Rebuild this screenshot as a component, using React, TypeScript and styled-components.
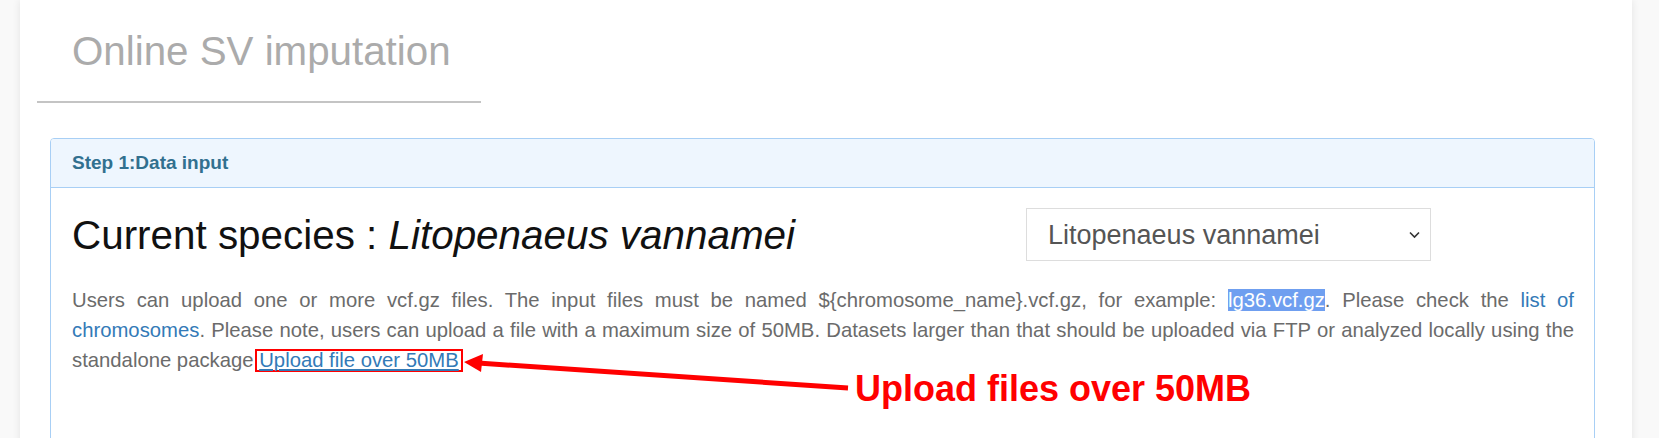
import React from 'react';
import styled, { createGlobalStyle } from 'styled-components';

const GlobalStyle = createGlobalStyle`
  html, body {
    margin: 0;
    padding: 0;
  }

  body {
    background: #f9f9f9;
    font-family: "Liberation Sans", Arial, Helvetica, sans-serif;
    overflow: hidden;
  }
`;

const StyledPage = styled.div`
  /* Position */
  position: relative;
  width: 1659px;
  height: 438px;
  overflow: hidden;
`;

const StyledCard = styled.main`
  /* Display */
  width: 1612px;
  min-height: 470px;
  margin-left: 20px;
  padding-top: 30px;
  box-sizing: border-box;
  background: #fff;
  box-shadow: 0 0 8px rgba(0, 0, 0, 0.09);
`;

const StyledTitle = styled.h2`
  /* Display */
  width: 444px;
  margin: 0 0 0 17px;
  padding: 0 0 27px 35px;
  box-sizing: border-box;
  border-bottom: 2px solid #c4c4c4;

  /* Text */
  font-size: 40.3px;
  line-height: 44px;
  font-weight: 400;
  color: #ababab;
`;

const StyledPanel = styled.section`
  /* Display */
  width: 1545px;
  margin: 35px 0 0 30px;
  box-sizing: border-box;
  border: 1px solid #a8cff5;
  border-radius: 4px;
`;

const StyledPanelHeading = styled.div`
  /* Display */
  height: 48px;
  display: flex;
  align-items: center;
  padding: 0 21px;
  background: #eef6fe;
  border-bottom: 1px solid #a8cff5;
  border-radius: 3px 3px 0 0;

  /* Text */
  font-size: 19px;
  font-weight: 700;
  color: #31708f;
`;

const StyledPanelBody = styled.div`
  /* Display */
  min-height: 300px;
  padding: 20px 20px 0 21px;
`;

const StyledSpeciesRow = styled.div`
  /* Display */
  display: grid;
  grid-template-columns: 954px 405px;
  align-items: center;
`;

const StyledSpeciesTitle = styled.h3`
  /* Text */
  margin: 0;
  font-size: 40.4px;
  line-height: 44px;
  font-weight: 400;
  color: #111;

  em {
    font-style: italic;
  }
`;

const StyledSelectWrap = styled.div`
  /* Position */
  position: relative;
  height: 53px;
`;

const StyledSelect = styled.select`
  /* Display */
  width: 100%;
  height: 53px;
  padding: 0 40px 0 21px;
  appearance: none;
  border: 1px solid #ddd;
  border-radius: 0;
  background: #fff;
  outline: none;

  /* Text */
  font-family: inherit;
  font-size: 27px;
  color: #555;
`;

const StyledChevron = styled.svg`
  /* Position */
  position: absolute;
  right: 11px;
  top: 50%;
  transform: translateY(-50%);
  pointer-events: none;
`;

const StyledText = styled.p`
  /* Text */
  margin: 24px 0 0;
  font-size: 20.3px;
  line-height: 30px;
  color: #6b6b6b;
  text-align: justify;
`;

const StyledLink = styled.a`
  color: #337ab7;
  text-decoration: none;
`;

const StyledMark = styled.span`
  background: #6f9ff0;
  color: #fff;
`;

const StyledBoxedLink = styled.a`
  /* Display */
  display: inline-block;
  margin-left: -4px;
  padding: 0 2px;
  border: 2px solid #f00;
  line-height: 19px;

  /* Text */
  color: #337ab7;
  text-decoration: underline;
`;

const StyledArrow = styled.svg`
  /* Position */
  position: absolute;
  left: 0;
  top: 0;
  pointer-events: none;
`;

const StyledNote = styled.div`
  /* Position */
  position: absolute;
  left: 855px;
  top: 369px;

  /* Text */
  font-size: 36px;
  line-height: 40px;
  font-weight: 700;
  color: #f00;
  white-space: nowrap;
`;

function App() {
  return (
    <StyledPage>
      <GlobalStyle />
      <StyledCard>
        <StyledTitle>Online SV imputation</StyledTitle>
        <StyledPanel>
          <StyledPanelHeading>Step 1:Data input</StyledPanelHeading>
          <StyledPanelBody>
            <StyledSpeciesRow>
              <StyledSpeciesTitle>
                Current species : <em>Litopenaeus vannamei</em>
              </StyledSpeciesTitle>
              <StyledSelectWrap>
                <StyledSelect defaultValue="lv">
                  <option value="lv">Litopenaeus vannamei</option>
                </StyledSelect>
                <StyledChevron width="11" height="7" viewBox="0 0 11 7">
                  <path
                    d="M1 1l4.5 4.5L10 1"
                    fill="none"
                    stroke="#333"
                    strokeWidth="1.6"
                  />
                </StyledChevron>
              </StyledSelectWrap>
            </StyledSpeciesRow>
            <StyledText>
              Users can upload one or more vcf.gz files. The input files must
              be named {'${chromosome_name}'}.vcf.gz, for example:{' '}
              <StyledMark>lg36.vcf.gz</StyledMark>. Please check the{' '}
              <StyledLink href="#">list of chromosomes</StyledLink>. Please
              note, users can upload a file with a maximum size of 50MB.
              Datasets larger than that should be uploaded via FTP or analyzed
              locally using the standalone package{' '}
              <StyledBoxedLink href="#">Upload file over 50MB</StyledBoxedLink>
            </StyledText>
          </StyledPanelBody>
        </StyledPanel>
      </StyledCard>
      <StyledArrow width="1659" height="438" viewBox="0 0 1659 438">
        <line
          x1="848"
          y1="388"
          x2="478"
          y2="363"
          stroke="#f00"
          strokeWidth="5"
        />
        <polygon points="464,362 483,354 481,372" fill="#f00" />
      </StyledArrow>
      <StyledNote>Upload files over 50MB</StyledNote>
    </StyledPage>
  );
}

export default App;
